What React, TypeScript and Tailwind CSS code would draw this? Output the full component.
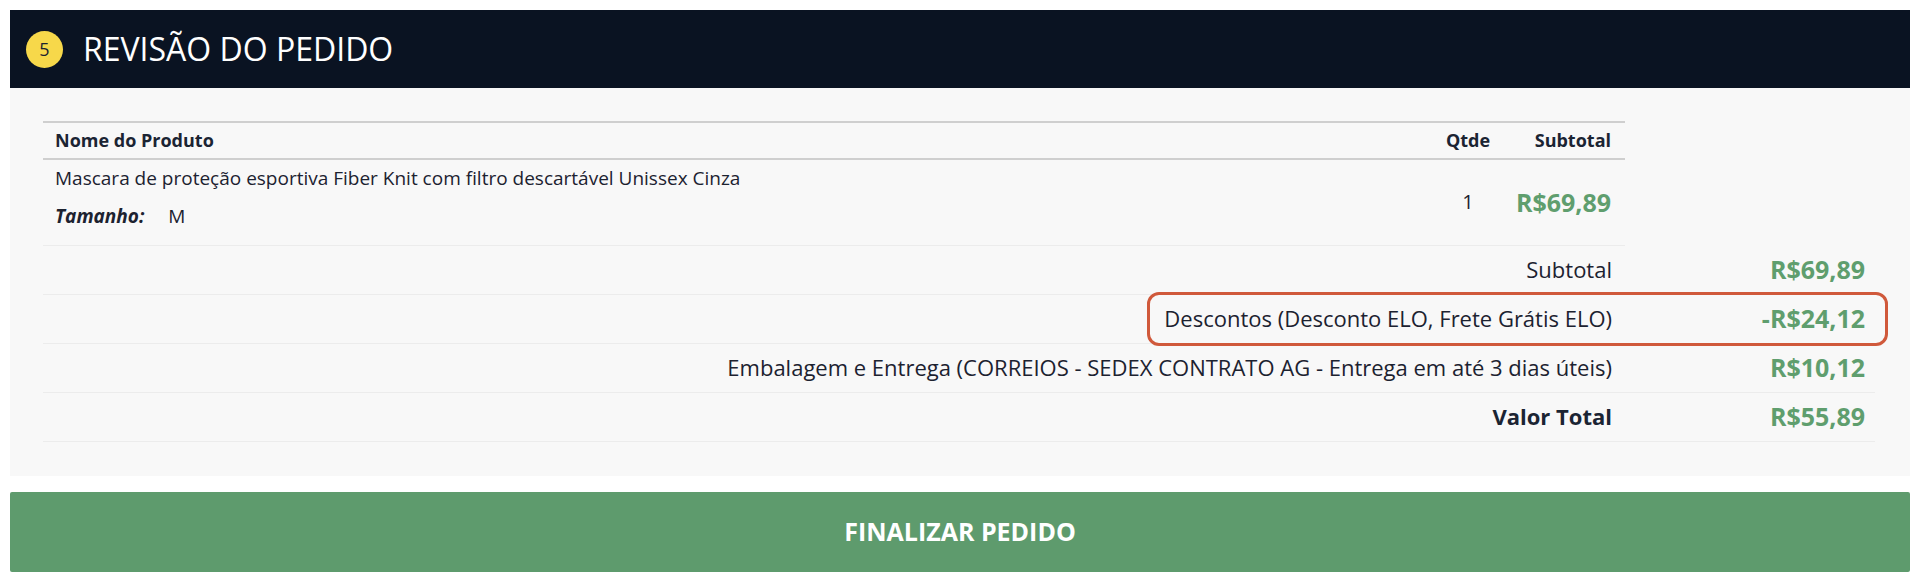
import React from 'react';

const summary = [
  { label: 'Subtotal', value: 'R$69,89' },
  { label: 'Descontos (Desconto ELO, Frete Grátis ELO)', value: '-R$24,12', highlight: true },
  { label: 'Embalagem e Entrega (CORREIOS - SEDEX CONTRATO AG - Entrega em até 3 dias úteis)', value: 'R$10,12' },
  { label: 'Valor Total', value: 'R$55,89', bold: true },
];

export default function App() {
  return (
    <div className="min-h-screen bg-white p-[10px] font-['Open_Sans',sans-serif] text-[#1c2230]">
      {/* Header */}
      <div className="flex h-[78px] items-center gap-[20px] bg-[#0a1322] px-[16px]">
        <span className="flex h-[37px] w-[37px] items-center justify-center rounded-full bg-[#f7d84a] text-[18px] text-[#1c2230]">
          5
        </span>
        <h1 className="text-[32px] font-normal leading-none text-white">REVISÃO DO PEDIDO</h1>
      </div>

      {/* Review panel */}
      <div className="bg-[#f8f8f8] pt-[33px] pr-[35px] pb-[34px] pl-[33px]">
        <table className="w-[1582px] border-collapse">
          <thead>
            <tr className="h-[37px] border-y-2 border-[#cfcfcf] text-[18px]">
              <th className="pl-[12px] text-left font-bold text-[#1b2433]">Nome do Produto</th>
              <th className="w-[70px] text-center font-bold text-[#1b2433]">Qtde</th>
              <th className="w-[122px] pr-[14px] text-right font-bold text-[#1b2433]">Subtotal</th>
            </tr>
          </thead>
          <tbody>
            <tr className="h-[86px] border-b border-[#ececec] text-[19px]">
              <td className="pl-[12px] align-top">
                <p className="mt-[5px] leading-[26px]">
                  Mascara de proteção esportiva Fiber Knit com filtro descartável Unissex Cinza
                </p>
                <p className="mt-[12px] leading-[26px]">
                  <span className="font-bold italic">Tamanho:</span>
                  <span className="ml-[24px]">M</span>
                </p>
              </td>
              <td className="text-center text-[20px]">1</td>
              <td className="pr-[14px] text-right text-[25px] font-bold text-[#5f9e6e]">R$69,89</td>
            </tr>
          </tbody>
        </table>

        {summary.map((row) => (
          <div
            key={row.label}
            className="relative flex h-[49px] items-center border-b border-[#ececec]"
          >
            <span
              className={`flex-1 pr-[14px] text-right text-[22px] ${
                row.bold ? 'font-bold text-[#1b2433]' : 'text-[#1c2230]'
              }`}
            >
              {row.label}
            </span>
            <span className="w-[249px] pr-[10px] text-right text-[25px] font-bold text-[#5f9e6e]">
              {row.value}
            </span>
            {row.highlight && (
              <div className="pointer-events-none absolute top-[-3px] right-[-13px] bottom-[-3px] w-[741px] rounded-[12px] border-[3px] border-[#d0593b]" />
            )}
          </div>
        ))}
      </div>

      {/* Action */}
      <button className="mt-[16px] flex h-[80px] w-full items-center justify-center rounded-[2px] bg-[#5e9b6d] text-[25px] font-bold text-white">
        FINALIZAR PEDIDO
      </button>
    </div>
  );
}
